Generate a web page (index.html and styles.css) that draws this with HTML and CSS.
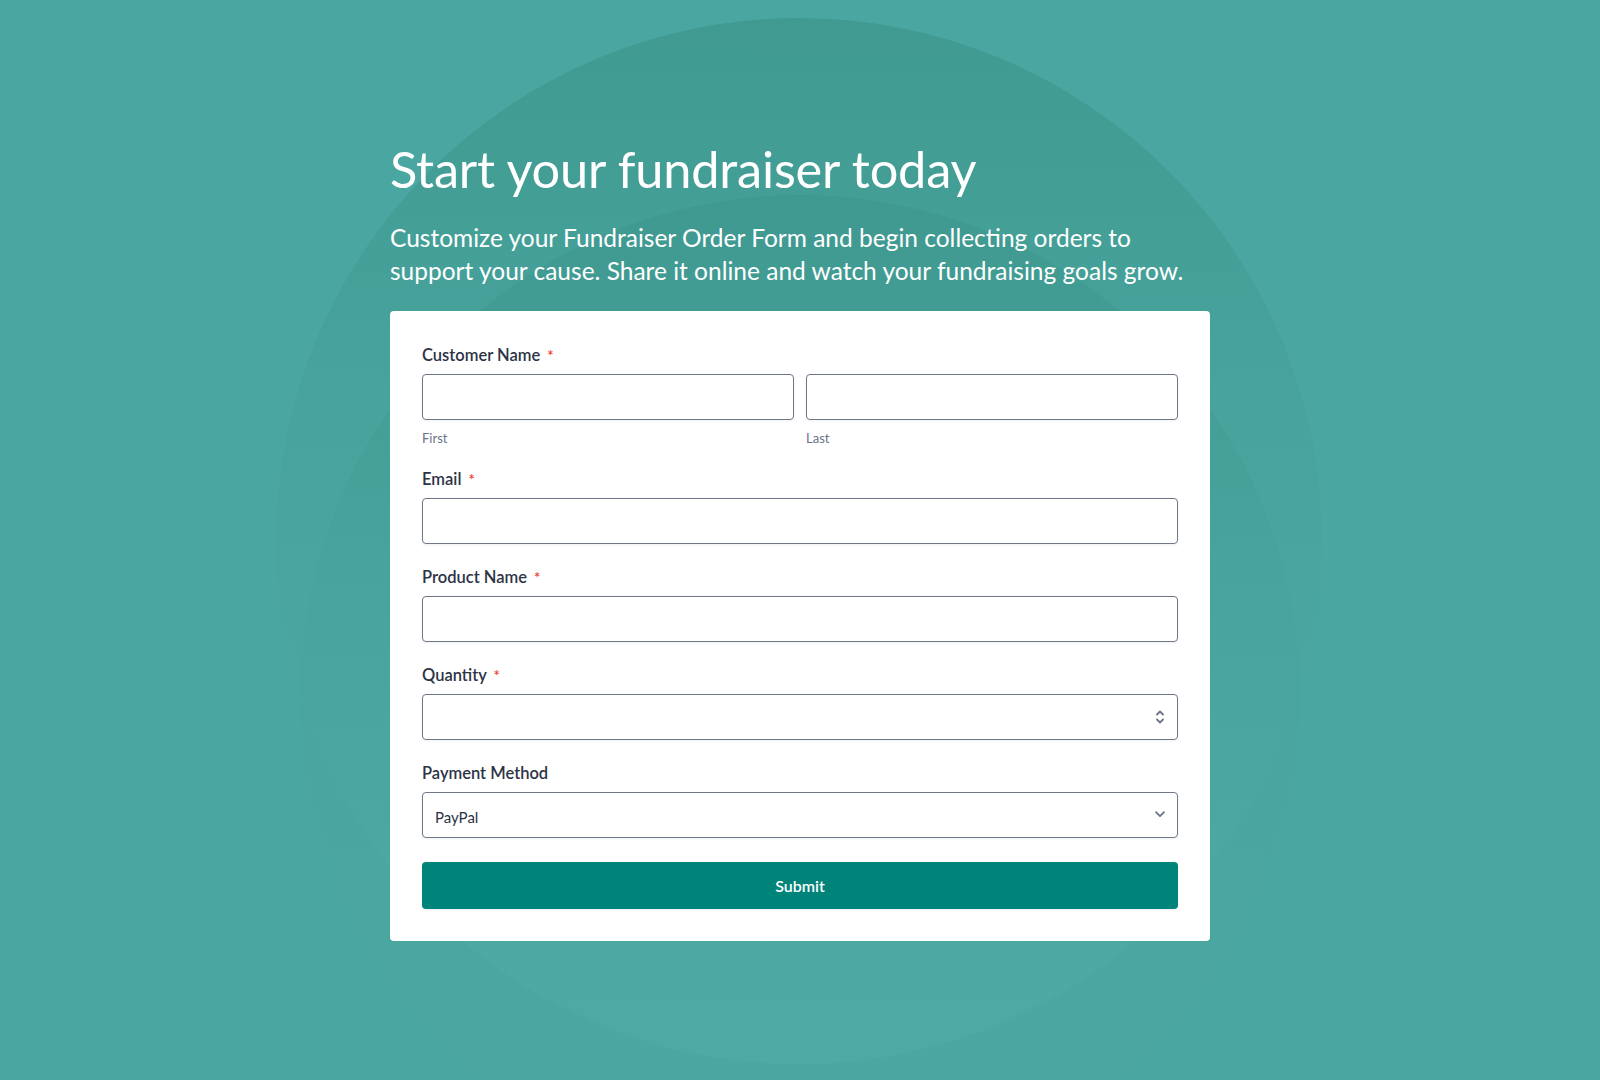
FILE: index.html
```html
<!DOCTYPE html>
<html lang="en">
<head>
<meta charset="utf-8">
<title>Start your fundraiser today</title>
<link rel="stylesheet" href="styles.css">
</head>
<body>
<div class="backdrop" aria-hidden="true">
  <div class="ring ring-outer"></div>
  <div class="ring ring-inner"></div>
</div>
<main class="page">
  <header class="intro">
    <h1 class="title">Start your fundraiser today</h1>
    <p class="lead">Customize your Fundraiser Order Form and begin collecting orders to<br>support your cause. Share it online and watch your fundraising goals grow.</p>
  </header>
  <form class="card">
    <div class="field">
      <div class="label">Customer Name <span class="req">*</span></div>
      <div class="name-row">
        <div class="name-col">
          <input class="input" type="text">
          <div class="sublabel">First</div>
        </div>
        <div class="name-col">
          <input class="input" type="text">
          <div class="sublabel">Last</div>
        </div>
      </div>
    </div>
    <div class="field">
      <div class="label">Email <span class="req">*</span></div>
      <input class="input" type="email">
    </div>
    <div class="field">
      <div class="label">Product Name <span class="req">*</span></div>
      <input class="input" type="text">
    </div>
    <div class="field">
      <div class="label">Quantity <span class="req">*</span></div>
      <div class="control">
        <input class="input number" type="number">
        <svg class="ctrl-icon spin" width="10" height="16" viewBox="0 0 10 16" fill="none" stroke="#6b7386" stroke-width="1.8" stroke-linecap="round" stroke-linejoin="round"><path d="M2 5.5 5 2.5 8 5.5"/><path d="M2 10.5 5 13.5 8 10.5"/></svg>
      </div>
    </div>
    <div class="field">
      <div class="label">Payment Method</div>
      <div class="control">
        <select class="input select">
          <option>PayPal</option>
        </select>
        <svg class="ctrl-icon chev" width="12" height="8" viewBox="0 0 12 8" fill="none" stroke="#6b7386" stroke-width="1.8" stroke-linecap="round" stroke-linejoin="round"><path d="M2 2 6 6 10 2"/></svg>
      </div>
    </div>
    <button class="submit" type="button">Submit</button>
  </form>
</main>
</body>
</html>
```
FILE: styles.css
```css
html, body {
  margin: 0;
  padding: 0;
}
body {
  width: 1600px;
  height: 1080px;
  overflow: hidden;
  position: relative;
  background: #4aa6a0;
  font-family: "Lato", "Noto Sans", sans-serif;
  color: #2c3345;
}
.backdrop {
  position: absolute;
  inset: 0;
  overflow: hidden;
  z-index: 0;
}
.ring {
  position: absolute;
  border-radius: 50%;
}
.ring-outer {
  left: 276px;
  top: 18px;
  width: 1046px;
  height: 1046px;
  background: linear-gradient(180deg, rgba(52,140,128,0.45) 0%, rgba(60,150,140,0.22) 35%, rgba(80,172,164,0.25) 75%, rgba(84,176,168,0.35) 100%);
}
.ring-inner {
  left: 300px;
  top: 195px;
  width: 1000px;
  height: 1000px;
  background: linear-gradient(180deg, rgba(52,140,128,0.28) 0%, rgba(60,150,140,0.10) 40%, rgba(90,176,168,0.12) 100%);
}
.page {
  position: relative;
  z-index: 1;
  width: 820px;
  margin: 0 auto;
  padding-top: 137px;
}
.intro {
  color: #ffffff;
}
.title {
  margin: 0;
  font-size: 50.5px;
  font-weight: 400;
  line-height: 64px;
  letter-spacing: -0.2px;
}
.lead {
  margin: 20px 0 24px;
  font-size: 24.5px;
  line-height: 33px;
  font-weight: 400;
}
.card {
  background: #ffffff;
  border-radius: 4px;
  padding: 34px 32px 32px;
  display: flex;
  flex-direction: column;
  gap: 23px;
}
.field {
  display: flex;
  flex-direction: column;
}
.label {
  font-size: 16.5px;
  line-height: 20px;
  height: 20px;
  font-weight: 600;
  color: #2c3345;
  margin-bottom: 9px;
}
.req {
  color: #ec3b2e;
  font-size: 15px;
  line-height: 0;
  margin-left: 3px;
}
.name-row {
  display: grid;
  grid-template-columns: 1fr 1fr;
  gap: 12px;
}
.name-col {
  display: flex;
  flex-direction: column;
}
.sublabel {
  margin-top: 10px;
  font-size: 13px;
  line-height: 16px;
  color: #6c7389;
}
.input {
  box-sizing: border-box;
  width: 100%;
  height: 46px;
  margin: 0;
  border: 1px solid #6f7789;
  border-radius: 4px;
  background: #ffffff;
  box-shadow: 0 1px 3px rgba(44, 51, 69, 0.08);
  font-family: inherit;
  font-size: 15px;
  color: #2c3345;
  padding: 0 12px;
  outline: none;
}
.number {
  -moz-appearance: textfield;
  appearance: textfield;
}
.number::-webkit-inner-spin-button,
.number::-webkit-outer-spin-button {
  -webkit-appearance: none;
  margin: 0;
}
.select {
  -webkit-appearance: none;
  appearance: none;
  padding-top: 3px;
}
.control {
  position: relative;
}
.ctrl-icon {
  position: absolute;
  top: 50%;
  pointer-events: none;
}
.spin {
  right: 13px;
  transform: translateY(-50%);
}
.chev {
  right: 12px;
  transform: translateY(-60%);
}
.submit {
  height: 47px;
  margin-top: 1px;
  border: none;
  border-radius: 4px;
  background: #00847a;
  color: #ffffff;
  font-family: inherit;
  font-size: 16px;
  font-weight: 600;
  cursor: pointer;
  box-shadow: 0 1px 3px rgba(44, 51, 69, 0.08);
}
```
